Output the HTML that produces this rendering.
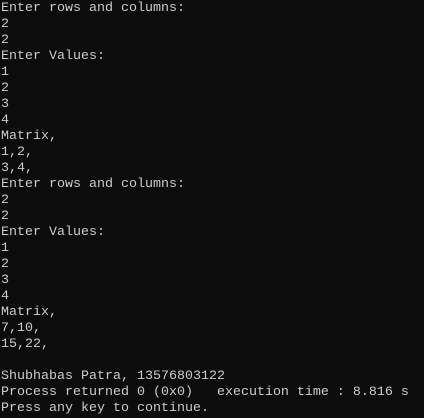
<!DOCTYPE html>
<html><head><meta charset="utf-8"><style>
html,body{margin:0;padding:0;background:#0c0c0c;width:424px;height:418px;overflow:hidden}
pre{margin:0;padding:1px 0 0 1px;font-family:"Liberation Mono",monospace;font-size:13.33px;line-height:16px;color:#cccccc}
</style></head><body><pre>Enter rows and columns:
2
2
Enter Values:
1
2
3
4
Matrix,
1,2,
3,4,
Enter rows and columns:
2
2
Enter Values:
1
2
3
4
Matrix,
7,10,
15,22,

Shubhabas Patra, 13576803122
Process returned 0 (0x0)   execution time : 8.816 s
Press any key to continue.</pre></body></html>
